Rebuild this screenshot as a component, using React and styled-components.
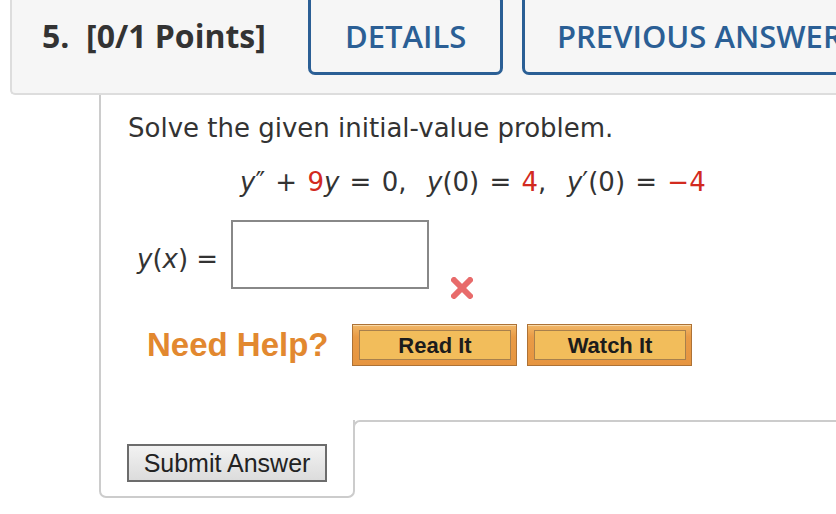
import React from 'react';
import styled, { createGlobalStyle } from 'styled-components';

const GlobalStyle = createGlobalStyle`
  html, body {
    margin: 0;
    padding: 0;
    background: #ffffff;
  }
  body {
    width: 836px;
    height: 514px;
    overflow: hidden;
  }
`;

const Page = styled.div`
  padding-left: 10px;
  width: 900px;
`;

const Header = styled.div`
  display: flex;
  align-items: flex-start;
  height: 93px;
  background: #f6f6f6;
  border-left: 2px solid #dddddd;
  border-bottom: 2px solid #dddddd;
  border-bottom-left-radius: 5px;
  padding-left: 30px;
`;

const Title = styled.div`
  font-family: "Open Sans", sans-serif;
  font-weight: 700;
  font-size: 32px;
  color: #333333;
  margin-top: 14px;
  width: 266px;
  white-space: nowrap;
`;

const TabButton = styled.div`
  box-sizing: border-box;
  margin-top: -6px;
  margin-left: ${(p) => p.$gap || 0}px;
  height: 81px;
  width: ${(p) => p.$width}px;
  border: 3px solid #2b5f95;
  border-radius: 7px;
  padding-top: 18px;
  padding-left: ${(p) => p.$pad}px;
  font-family: "Open Sans", sans-serif;
  font-weight: 600;
  font-size: 31px;
  color: #2b5f95;
  white-space: nowrap;
  overflow: hidden;
  background: #f6f6f6;
`;

const Body = styled.div`
  margin-left: 89px;
  border-left: 2px solid #cccccc;
  height: 325px;
  padding-left: 27px;
  box-sizing: border-box;
  font-family: "DejaVu Sans", Verdana, sans-serif;
  color: #333333;
`;

const Prompt = styled.div`
  font-size: 26px;
  padding-top: 18px;
  line-height: 30px;
`;

const Equation = styled.div`
  font-size: 26px;
  line-height: 30px;
  margin-top: 24px;
  padding-left: 112px;
  white-space: pre;
  word-spacing: 2px;
`;

const Var = styled.i`
  font-style: italic;
`;

const Red = styled.span`
  color: #d22a1f;
`;

const AnswerRow = styled.div`
  display: flex;
  align-items: flex-start;
  margin-top: 23px;
  padding-left: 9px;
`;

const Label = styled.div`
  font-size: 26px;
  line-height: 30px;
  margin-top: 24px;
  width: 94px;
  white-space: pre;
`;

const AnswerBox = styled.div`
  width: 198px;
  height: 69px;
  box-sizing: border-box;
  border: 2px solid #888888;
  background: #ffffff;
`;

const WrongMark = styled.svg`
  margin-left: 20px;
  margin-top: 56px;
`;

const HelpRow = styled.div`
  display: flex;
  align-items: center;
  margin-top: 24px;
  padding-left: 19px;
`;

const HelpLabel = styled.div`
  font-family: "Liberation Sans", Arial, sans-serif;
  font-weight: 700;
  font-size: 33px;
  color: #e2882f;
  width: 205px;
  white-space: nowrap;
`;

const HelpButton = styled.div`
  box-sizing: border-box;
  width: 165px;
  height: 42px;
  margin-right: 10px;
  padding: 5px 5px 5px 6px;
  background: linear-gradient(#f1b768, #e99b46 30%, #e69540);
  border: 1px solid #ad7236;
  box-shadow: inset 0 1px 0 #f8d9a8;
`;

const HelpInner = styled.div`
  box-sizing: border-box;
  height: 100%;
  border: 1px solid #a8804c;
  background: #f2bd5b;
  display: flex;
  align-items: center;
  justify-content: center;
  font-family: "Liberation Sans", Arial, sans-serif;
  font-weight: 700;
  font-size: 22px;
  color: #1c1c1c;
  padding-top: 1px;
`;

const Footer = styled.div`
  display: flex;
  align-items: flex-start;
  margin-left: 89px;
`;

const SubmitTab = styled.div`
  box-sizing: border-box;
  width: 256px;
  height: 78px;
  border: 2px solid #cccccc;
  border-top: none;
  border-radius: 0 0 7px 7px;
  padding-top: 24px;
  padding-left: 26px;
`;

const Filler = styled.div`
  flex: 1;
  height: 30px;
  margin-left: -2px;
  border-top: 2px solid #cccccc;
  border-left: 2px solid #cccccc;
  border-top-left-radius: 7px;
`;

const SubmitButton = styled.button`
  box-sizing: border-box;
  width: 200px;
  height: 38px;
  padding: 0;
  border: 2px solid #6c6c6c;
  border-radius: 0;
  background: linear-gradient(#f2f2f2, #dcdcdc);
  font-family: "Liberation Sans", Arial, sans-serif;
  font-size: 25px;
  color: #222222;
`;

export default function App() {
  return (
    <Page>
      <GlobalStyle />
      <Header>
        <Title>5.&nbsp;&nbsp;[0/1 Points]</Title>
        <TabButton $width={195} $pad={34}>DETAILS</TabButton>
        <TabButton $width={340} $pad={32} $gap={19}>PREVIOUS ANSWERS</TabButton>
      </Header>
      <Body>
        <Prompt>Solve the given initial-value problem.</Prompt>
        <Equation>
          <Var>y</Var>″ + <Red>9</Red><Var>y</Var> = 0,  <Var>y</Var>(0) = <Red>4</Red>,  <Var>y</Var>′(0) = <Red>−4</Red>
        </Equation>
        <AnswerRow>
          <Label><Var>y</Var>(<Var>x</Var>) = </Label>
          <AnswerBox />
          <WrongMark width="26" height="24" viewBox="0 0 26 24">
            <g stroke="#e65c5c" strokeWidth="6" strokeLinecap="round" opacity="0.9">
              <line x1="5" y1="4" x2="21" y2="20" />
              <line x1="21" y1="4" x2="5" y2="20" />
            </g>
          </WrongMark>
        </AnswerRow>
        <HelpRow>
          <HelpLabel>Need Help?</HelpLabel>
          <HelpButton><HelpInner>Read It</HelpInner></HelpButton>
          <HelpButton><HelpInner>Watch It</HelpInner></HelpButton>
        </HelpRow>
      </Body>
      <Footer>
        <SubmitTab>
          <SubmitButton>Submit Answer</SubmitButton>
        </SubmitTab>
        <Filler />
      </Footer>
    </Page>
  );
}
